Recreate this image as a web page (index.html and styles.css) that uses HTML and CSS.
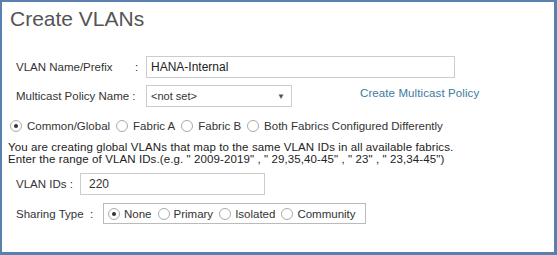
FILE: index.html
```html
<!DOCTYPE html>
<html lang="en">
<head>
  <meta charset="UTF-8">
  <meta name="viewport" content="width=device-width, initial-scale=1.0">
  <title>Create VLANs</title>
  <link rel="stylesheet" href="styles.css">
</head>
<body>
  <div class="dialog">
    <h1 class="dialog-title">Create VLANs</h1>

    <div class="form-row row-name">
      <label class="field-label label-name">VLAN Name/Prefix</label>
      <span class="colon">:</span>
      <input type="text" class="text-input name-input" value="HANA-Internal">
    </div>

    <div class="form-row row-policy">
      <label class="field-label label-policy">Multicast Policy Name :</label>
      <div class="select-box">
        <span>&lt;not set&gt;</span>
        <span class="select-arrow">&#9660;</span>
      </div>
      <a class="policy-link" href="#">Create Multicast Policy</a>
    </div>

    <div class="radio-row fabric-row">
      <label class="radio-item"><span class="radio checked"></span>Common/Global</label>
      <label class="radio-item"><span class="radio"></span>Fabric A</label>
      <label class="radio-item"><span class="radio"></span>Fabric B</label>
      <label class="radio-item"><span class="radio"></span>Both Fabrics Configured Differently</label>
    </div>

    <p class="help-text">You are creating global VLANs that map to the same VLAN IDs in all available fabrics.<br>Enter the range of VLAN IDs.(e.g. " 2009-2019" , " 29,35,40-45" , " 23" , " 23,34-45")</p>

    <div class="form-row row-ids">
      <label class="field-label label-ids">VLAN IDs :</label>
      <input type="text" class="text-input ids-input" value="220">
    </div>

    <div class="form-row row-sharing">
      <label class="field-label label-sharing">Sharing Type&nbsp; :</label>
      <div class="radio-row sharing-box">
        <label class="radio-item"><span class="radio checked"></span>None</label>
        <label class="radio-item"><span class="radio"></span>Primary</label>
        <label class="radio-item"><span class="radio"></span>Isolated</label>
        <label class="radio-item"><span class="radio"></span>Community</label>
      </div>
    </div>
  </div>
</body>
</html>
```

FILE: styles.css
```css
body {
  margin: 0;
  padding: 0;
  background-color: #fff;
  font-family: 'Liberation Sans', Arial, sans-serif;
  font-size: 11.5px;
  color: #333;
}

.dialog {
  width: 557px;
  height: 255px;
  box-sizing: border-box;
  border: 2px solid #5a80b0;
  border-right-width: 3px;
  border-bottom-width: 3px;
  padding: 0 0 0 6px;
}

.dialog-title {
  margin: 0;
  padding: 5px 0 0 2px;
  font-size: 21px;
  font-weight: normal;
  line-height: 24px;
  color: #555;
}

.form-row {
  display: flex;
  align-items: center;
  padding-left: 8px;
}

.row-name {
  margin-top: 25px;
}

.field-label {
  color: #333;
  white-space: nowrap;
}

.label-name {
  width: 119px;
}

.colon {
  width: 11px;
}

.label-policy {
  width: 130px;
}

.label-ids {
  width: 64px;
}

.label-sharing {
  width: 87px;
}

.text-input {
  height: 22px;
  box-sizing: border-box;
  border: 1px solid #ccc;
  padding: 0 8px;
  font-family: 'Liberation Sans', Arial, sans-serif;
  font-size: 12px;
  color: #333;
  outline: none;
}

.name-input {
  width: 309px;
  padding-left: 4px;
  color: #222;
}

.row-policy {
  margin-top: 7px;
}

.select-box {
  display: flex;
  justify-content: space-between;
  align-items: center;
  width: 146px;
  height: 22px;
  box-sizing: border-box;
  border: 1px solid #ccc;
  padding: 0 6px 0 4px;
  color: #333;
  font-size: 11px;
}

.select-arrow {
  font-size: 8px;
  color: #555;
}

.policy-link {
  margin-left: 68px;
  margin-top: -7px;
  color: #3b7a9e;
  letter-spacing: 0.1px;
  text-decoration: none;
}

.radio-row {
  display: flex;
  align-items: center;
}

.fabric-row {
  margin-top: 13px;
  padding-left: 2px;
  gap: 6px;
}

.radio-item {
  display: flex;
  align-items: center;
  gap: 5px;
}

.radio {
  width: 12px;
  height: 12px;
  box-sizing: border-box;
  border: 1px solid #aaa;
  border-radius: 50%;
  background-color: #fff;
  display: flex;
  justify-content: center;
  align-items: center;
}

.radio.checked::after {
  content: '';
  width: 4px;
  height: 4px;
  border-radius: 50%;
  background-color: #333;
}

.help-text {
  margin: 9px 0 0 0;
  line-height: 12px;
  letter-spacing: 0.1px;
  color: #222;
}

.row-ids {
  margin-top: 8px;
}

.ids-input {
  width: 185px;
}

.row-sharing {
  margin-top: 8px;
}

.sharing-box {
  height: 21px;
  width: 263px;
  box-sizing: border-box;
  border: 1px solid #bbb;
  padding-left: 4px;
  gap: 6px;
}

.sharing-box .radio-item {
  gap: 4px;
}
```
